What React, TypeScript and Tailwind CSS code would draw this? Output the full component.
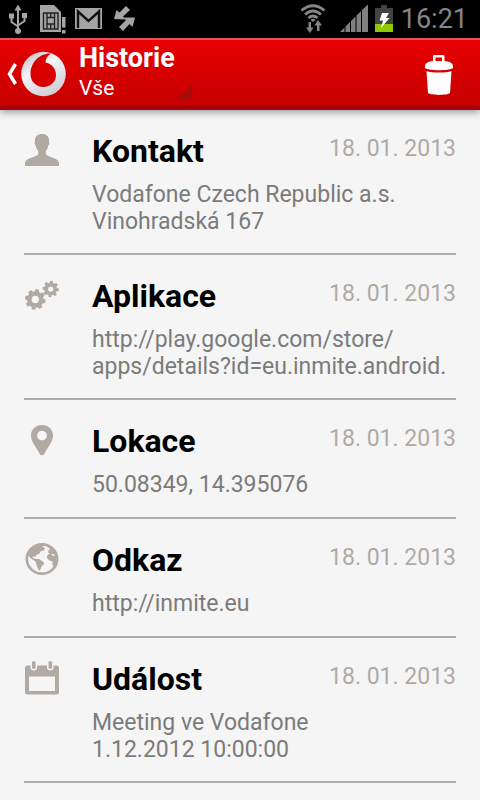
import type { ReactNode } from 'react';

type Entry = { title: string; date: string; lines: string[]; icon: ReactNode };

function gearPath(cx: number, cy: number, outer: number, inner: number, hole: number, teeth: number, turn: number) {
  const step = (Math.PI * 2) / teeth;
  const points: string[] = [];
  for (let i = 0; i < teeth; i++) {
    const a = turn + i * step;
    [
      [inner, -0.33],
      [outer, -0.22],
      [outer, 0.22],
      [inner, 0.33],
    ].forEach(([r, f]) => {
      points.push(`${(cx + r * Math.cos(a + f * step)).toFixed(2)} ${(cy + r * Math.sin(a + f * step)).toFixed(2)}`);
    });
  }
  return `M${points.join('L')}ZM${cx - hole} ${cy}a${hole} ${hole} 0 1 0 ${hole * 2} 0a${hole} ${hole} 0 1 0 ${-hole * 2} 0Z`;
}

const iconClass = 'h-9 w-9 shrink-0 fill-[#b0aaa2]';

const ContactIcon = () => (
  <svg viewBox="0 0 36 36" className={iconClass} aria-hidden="true">
    <path d="M18 2C13.6 2 10.8 4.5 10.9 8.9C10.9 10.1 10.4 10.5 10.7 11.8C10.9 13 11.5 13.2 11.8 13.7C12.2 16.1 13 17.7 14.2 18.9V21.7C13.8 23.2 12.4 23.8 10 24.7C5.5 26.2 1 27.5 1 31.2V34H35V31.2C35 27.5 30.5 26.2 26 24.7C23.6 23.8 22.2 23.2 21.8 21.7V18.9C23 17.7 23.8 16.1 24.2 13.7C24.5 13.2 25.1 13 25.3 11.8C25.6 10.5 25.1 10.1 25.1 8.9C25.2 4.5 22.4 2 18 2Z" />
  </svg>
);

const GearsIcon = () => (
  <svg viewBox="0 0 36 36" className={iconClass} fillRule="evenodd" aria-hidden="true">
    <path d={gearPath(11.3, 22.5, 10.4, 8.3, 3.7, 8, 0.2)} />
    <path d={gearPath(26.7, 12, 8.2, 6.4, 2.6, 8, 0.1)} />
  </svg>
);

const PinIcon = () => (
  <svg viewBox="0 0 36 36" className={iconClass} fillRule="evenodd" aria-hidden="true">
    <path d="M18 3C11.7 3 7 7.6 7 13.5C7 20 12.2 25 15.7 31.7C16.8 33.9 19.2 33.9 20.3 31.7C23.8 25 29 20 29 13.5C29 7.6 24.3 3 18 3ZM18 8.7A4.9 4.9 0 1 1 18 18.5A4.9 4.9 0 1 1 18 8.7Z" />
  </svg>
);

const GlobeIcon = () => (
  <svg viewBox="0 0 36 36" className={iconClass} aria-hidden="true">
    <path fillRule="evenodd" d="M18 2A16.5 16 0 1 1 18 34A16.5 16 0 1 1 18 2ZM18 4.7A13.8 13.3 0 1 0 18 31.3A13.8 13.3 0 1 0 18 4.7Z" />
    <path d="M5 10L9 5.5L15 3L20 3.5L18.5 6L21 7L20 9.5L17 10L15.5 12.5L12.5 14L11 16L8.5 15.5L9 17L11.5 18L15 18L19.5 21L20 23L17.5 25.5L16 29.5L14.5 29L12.5 24L11.5 20.5L7 17.5L4 14Z" />
    <path d="M22 5L27 5L32 10.5L34 17L33 23L30 26L28.5 24L28.5 20.5L25.5 19.5L23 17L23.5 14L26 12.5L24 11.5L24.5 9L26.5 8Z" />
    <path className="fill-[#f5f5f5]" d="M28 12.5L31 14L30.5 15L27.5 14Z" />
  </svg>
);

const CalendarIcon = () => (
  <svg viewBox="0 0 36 36" className={iconClass} aria-hidden="true">
    <path fillRule="evenodd" d="M3.5 5.5H32.5Q35 5.5 35 8V32Q35 34.5 32.5 34.5H3.5Q1 34.5 1 32V8Q1 5.5 3.5 5.5ZM5 16.5V31H31V16.5Z" />
    <path className="fill-[#f5f5f5]" d="M6.5 4.5H13V7.5Q13 10.5 9.8 10.5Q6.5 10.5 6.5 7.5ZM23 4.5H29.5V7.5Q29.5 10.5 26.3 10.5Q23 10.5 23 7.5Z" />
    <rect x="8" y="1" width="3.6" height="8" rx="1.8" />
    <rect x="24.5" y="1" width="3.6" height="8" rx="1.8" />
  </svg>
);

const entries: Entry[] = [
  { title: 'Kontakt', date: '18. 01. 2013', lines: ['Vodafone Czech Republic a.s.', 'Vinohradská 167'], icon: <ContactIcon /> },
  { title: 'Aplikace', date: '18. 01. 2013', lines: ['http://play.google.com/store/', 'apps/details?id=eu.inmite.android.'], icon: <GearsIcon /> },
  { title: 'Lokace', date: '18. 01. 2013', lines: ['50.08349, 14.395076'], icon: <PinIcon /> },
  { title: 'Odkaz', date: '18. 01. 2013', lines: ['http://inmite.eu'], icon: <GlobeIcon /> },
  { title: 'Událost', date: '18. 01. 2013', lines: ['Meeting ve Vodafone', '1.12.2012 10:00:00'], icon: <CalendarIcon /> },
];

function StatusBar() {
  return (
    <div className="flex h-[38px] items-center justify-between bg-black pr-3 pl-2">
      <div className="flex items-center gap-2">
        <svg viewBox="0 0 20 32" className="h-8 w-5" fill="none" stroke="#a5a5a5" strokeWidth="2" aria-label="USB">
          <path d="M10 6V28M3.5 15V19L10 23.5M16.5 14V18L10 22.5" />
          <path fill="#a5a5a5" stroke="none" d="M10 1.5L13.5 7.5H6.5ZM1 10.5H6V15.5H1ZM14 10H19V15H14Z" />
          <circle cx="10" cy="28" r="3" fill="#a5a5a5" stroke="none" />
        </svg>
        <svg viewBox="0 0 30 32" className="h-8 w-[30px]" aria-label="SIM">
          <path fill="#a5a5a5" d="M4 2H18L25 9V29H4Z" />
          <path fill="none" stroke="#222" strokeWidth="1.4" d="M7.5 10H22V26H7.5ZM11 14.5H18.5V21H11ZM11 10V14.5M14.7 10V14.5M18.5 10V14.5M11 21V26M14.7 21V26M18.5 21V26" />
          <path fill="#a5a5a5" stroke="#000" strokeWidth="1" d="M25.500 13.5H30V25H25.500ZM25.500 26.5H30V31H25.500Z" />
        </svg>
        <svg viewBox="0 0 30 32" className="h-8 w-[30px]" aria-label="Gmail">
          <path fill="#a5a5a5" d="M1 5H28V26H1Z" />
          <path fill="none" stroke="#111" strokeWidth="2.4" d="M4 25V8.5L14.500 18L25 8.5V25" />
        </svg>
        <svg viewBox="0 0 28 32" className="h-8 w-7" fill="#a5a5a5" aria-label="Sync">
          <path d="M2 16L4.500 7L7.500 9.500L14 3L18 7L11 13.500L13.500 16.500Z" />
          <path d="M23 14.500L20.500 24L17.500 21L11 28L7 24L14 17L11.500 14.500Z" />
        </svg>
      </div>
      <div className="flex items-center gap-2">
        <svg viewBox="0 0 28 32" className="h-8 w-7" fill="none" stroke="#858585" strokeWidth="2.8" aria-label="Wi-Fi">
          <path d="M2.5 7.5Q14 -2 25.5 7.5M6 11.5Q14 4.5 22 11.5M9.5 15Q14 11 18.5 15" />
          <path fill="#858585" stroke="none" d="M11.5 17Q14 14.5 16.5 17L14 19ZM9.5 19H12V24.5H14.5L11 30L7 24.5H9.5ZM18 28V22.5H15.5L19 17L23 22.5H20.5V28Z" />
        </svg>
        <svg viewBox="0 0 30 32" className="-mr-0.5 ml-1 h-8 w-[30px]" fill="#808080" aria-label="Signal">
          <path d="M1 29L5.5 24.5V29ZM6.5 23.5L11 19V29H6.5ZM12 18L16.5 13.5V29H12ZM17.5 12.5L22 8V29H17.5ZM23 7L29 1.5V29H23Z" />
        </svg>
        <svg viewBox="0 0 18 32" className="h-8 w-[18px]" aria-label="Battery">
          <path fill="#444" d="M6 2H12V5H18V21H0V5H6Z" />
          <path fill="#8fca00" d="M0 21H18V29H0Z" />
          <path fill="#fff" d="M7 10H14L11 15H14.5L6 25L8 17.5H4.5Z" />
        </svg>
        <time className="text-[27px] leading-8 text-[#858585]">16:21</time>
      </div>
    </div>
  );
}

function ActionBar() {
  return (
    <header className="flex h-[72px] items-center border-t-2 border-b-4 border-t-[#ea4f57] border-b-[#a80008] bg-linear-to-b from-[#e80000] to-[#c70000] pr-5 pl-1 shadow-[0_2px_8px_#00000066]">
      <button type="button" aria-label="Zpět" className="flex shrink-0 items-center">
        <svg viewBox="0 0 64 48" className="h-12 w-16" aria-hidden="true">
          <defs>
            <linearGradient id="silver" x1="0" y1="0" x2="0.6" y2="1">
              <stop offset="0" stopColor="#b5b5bd" />
              <stop offset="0.45" stopColor="#f5f5f8" />
              <stop offset="1" stopColor="#cfcfd6" />
            </linearGradient>
          </defs>
          <path d="M11.5 15L5.5 25L11.5 35" fill="none" stroke="#fff" strokeWidth="3.5" />
          <circle cx="39.5" cy="25" r="22.3" fill="url(#silver)" />
          <path fill="#d80000" d="M47 4.500C36 4 26.500 13 26.500 25C26.500 32.500 32 38 39.500 38C46.500 38 52 32.500 52 26C52 19.5 47.500 14.500 41.500 13.500C41.500 9.500 43.500 6.500 47 4.500Z" />
        </svg>
      </button>
      <div className="ml-[11px] flex h-full w-[113px] flex-col">
        <h1 className="text-[27px] leading-9 font-bold text-white">Historie</h1>
        <div className="flex">
          <select aria-label="Historie" defaultValue="Vše" className="min-w-0 flex-1 appearance-none bg-transparent text-[21px] leading-6 text-white">
            <option>Vše</option>
            <option>Kontakt</option>
            <option>Aplikace</option>
            <option>Lokace</option>
            <option>Odkaz</option>
            <option>Událost</option>
          </select>
          <svg viewBox="0 0 16 16" className="h-4 w-4 self-end fill-[#a90a0a]" aria-hidden="true">
            <path d="M16 0V16H0Z" />
          </svg>
        </div>
      </div>
      <button type="button" aria-label="Smazat" className="ml-auto">
        <svg viewBox="0 0 42 48" className="h-12 w-[42px] fill-white" aria-hidden="true">
          <path fillRule="evenodd" d="M15 7Q15 6 16 6H25.5Q26.5 6 26.5 7V12C31 12.5 35 14 35 17V19C31 22 11 22 7 19V17C7 14 11 12.5 15 12ZM17.5 8.5V12H24V8.5Z" />
          <path d="M8.5 22C14 24 28 24 33.5 22L32 44C29 46.5 13 46.5 10 44Z" />
        </svg>
      </button>
    </header>
  );
}

export default function App() {
  return (
    <div className="min-h-screen bg-[#f5f5f5] font-[Roboto,sans-serif]">
      <StatusBar />
      <ActionBar />
      <main className="px-6">
        <ul>
          {entries.map((entry) => (
            <li key={entry.title} className="flex min-h-[119px] gap-8 border-b-2 border-[#b0aaa5] pt-[22px] pb-[18px]">
              {entry.icon}
              <article className="min-w-0 flex-1">
                <div className="flex justify-between">
                  <h2 className="text-[32px] leading-[38px] font-bold text-black">{entry.title}</h2>
                  <time className="text-[23px] leading-[34px] text-[#b0aaa5]">{entry.date}</time>
                </div>
                <p className="pt-[11px] text-[23px] leading-[27px] whitespace-nowrap text-[#7b7b7b]">
                  {entry.lines.map((line) => (
                    <span key={line} className="block">{line}</span>
                  ))}
                </p>
              </article>
            </li>
          ))}
        </ul>
      </main>
    </div>
  );
}
